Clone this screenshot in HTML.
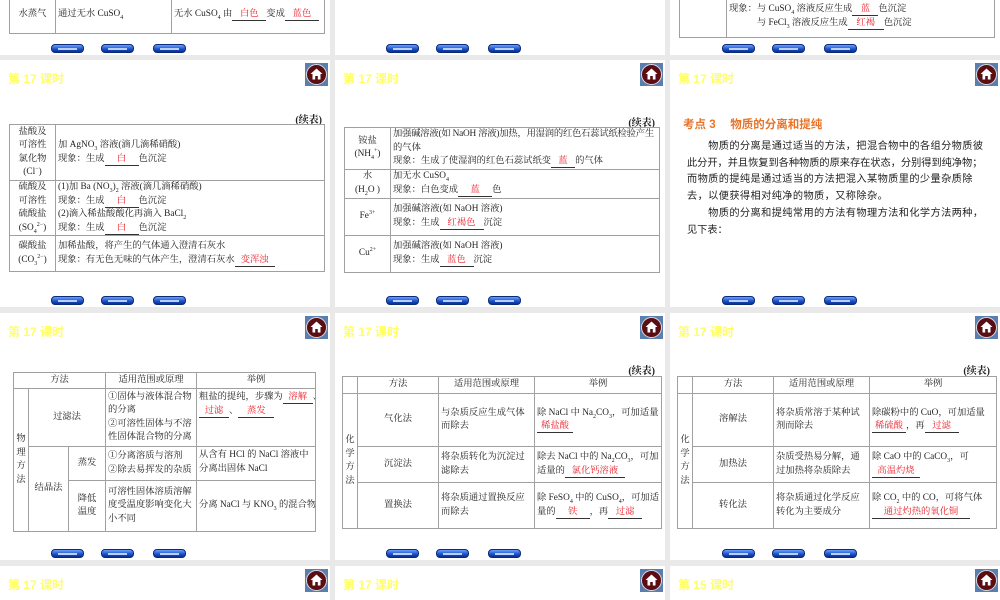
<!DOCTYPE html>
<html><head><meta charset="utf-8"><style>
*{margin:0;padding:0;box-sizing:border-box}
html,body{width:1000px;height:600px;overflow:hidden}
body{background:#e9e9e9;position:relative;font-family:"Liberation Serif","Noto Serif CJK SC",serif;color:#222}
.s{position:absolute;width:330px;height:247px;background:#fff;overflow:hidden}
.t{position:absolute;left:8px;top:10px;font:bold 12px "Liberation Sans","Noto Sans CJK SC",sans-serif;color:#ffff66}
.h{position:absolute;left:305px;top:3px;width:23px;height:23px;background:#5b7eb0}
.h i{position:absolute;left:1px;top:1px;width:21px;height:21px;border-radius:50%;background:#5a0d12;border:1.5px solid #d8d8d8}
.h svg{position:absolute;left:5px;top:5px}
.b{position:absolute;bottom:2px;width:33px;height:9px;border-radius:4px;background:linear-gradient(#6aa0ff,#1a4fc8 60%,#0c2f8a);border:1px solid #0b2a78}
.b::after{content:"";position:absolute;left:6px;right:6px;top:3px;height:2px;background:#b8d0ff}
table{position:absolute;border-collapse:collapse;table-layout:fixed;font-size:9.3px;line-height:13.5px}
td{border:1px solid #a0a0a0;padding:0 2px;vertical-align:middle;overflow:hidden}
sub,sup{font-size:6px;line-height:0}
.c{text-align:center}
.r{color:#e8202a;border-bottom:1px solid #333;display:inline-block;line-height:11px;text-align:center}
.xb{position:absolute;font-size:10px;font-weight:bold}
.p{position:absolute;left:17px;width:300px;font-size:10.2px;line-height:16.7px;white-space:nowrap;font-family:"Liberation Serif","Noto Sans CJK SC",sans-serif}
.sh{height:34px}
</style></head><body>

<!-- row 0 -->
<div class="s" style="left:0;top:-192px">
<table style="left:9px;top:187px;width:316px"><tr style="height:38px"><td class="c" style="width:46px">水蒸气</td><td style="width:116px">通过无水 CuSO<sub>4</sub></td><td style="white-space:nowrap">无水 CuSO<sub>4</sub> 由<span class="r" style="width:34px">白色</span>变成<span class="r" style="width:34px">蓝色</span></td></tr></table>
<i class="b" style="left:51px"></i><i class="b" style="left:101px"></i><i class="b" style="left:153px"></i>
</div>
<div class="s" style="left:335px;top:-192px">
<i class="b" style="left:51px"></i><i class="b" style="left:101px"></i><i class="b" style="left:153px"></i>
</div>
<div class="s" style="left:670px;top:-192px">
<table style="left:9px;top:170px;width:316px"><tr style="height:59px"><td style="width:47px"></td><td style="vertical-align:bottom;padding-bottom:7px;white-space:nowrap">现象：与 CuSO<sub>4</sub> 溶液反应生成<span class="r" style="width:26px">蓝</span>色沉淀<br>　　　与 FeCl<sub>3</sub> 溶液反应生成<span class="r" style="width:36px">红褐</span>色沉淀</td></tr></table>
<i class="b" style="left:52px"></i><i class="b" style="left:102px"></i><i class="b" style="left:154px"></i>
</div>

<!-- row 1 -->
<div class="s" style="left:0;top:60px">
<div class="t">第 17 课时</div>
<div class="h"><i></i><svg width="13" height="12" viewBox="0 0 13 12"><path d="M6.5 0.5L0.5 6H2.5V11.5H5.2V8H7.8V11.5H10.5V6H12.5Z" fill="#fff"/></svg></div>
<div class="xb" style="right:8px;top:51px">(续表)</div>
<table style="left:9px;top:64px;width:316px">
<tr style="height:56px"><td class="c" style="width:46px">盐酸及<br>可溶性<br>氯化物<br>(Cl<sup>−</sup>)</td><td>加 AgNO<sub>3</sub> 溶液(滴几滴稀硝酸)<br>现象：生成<span class="r" style="width:34px">白</span>色沉淀</td></tr>
<tr style="height:55px"><td class="c">硫酸及<br>可溶性<br>硫酸盐<br>(SO<sub>4</sub><sup>2−</sup>)</td><td>(1)加 Ba (NO<sub>3</sub>)<sub>2</sub> 溶液(滴几滴稀硝酸)<br>现象：生成<span class="r" style="width:34px">白</span>色沉淀<br>(2)滴入稀盐酸酸化再滴入 BaCl<sub>2</sub><br>现象：生成<span class="r" style="width:34px">白</span>色沉淀</td></tr>
<tr style="height:36px"><td class="c">碳酸盐<br>(CO<sub>3</sub><sup>2−</sup>)</td><td style="white-space:nowrap">加稀盐酸，将产生的气体通入澄清石灰水<br>现象：有无色无味的气体产生，澄清石灰水<span class="r" style="width:40px">变浑浊</span></td></tr>
</table>
<i class="b" style="left:51px"></i><i class="b" style="left:101px"></i><i class="b" style="left:153px"></i>
</div>

<div class="s" style="left:335px;top:60px">
<div class="t">第 17 课时</div>
<div class="h"><i></i><svg width="13" height="12" viewBox="0 0 13 12"><path d="M6.5 0.5L0.5 6H2.5V11.5H5.2V8H7.8V11.5H10.5V6H12.5Z" fill="#fff"/></svg></div>
<div class="xb" style="right:10px;top:54px">(续表)</div>
<table style="left:9px;top:67px;width:316px">
<tr style="height:41px"><td class="c" style="width:46px">铵盐<br>(NH<sub>4</sub><sup>+</sup>)</td><td><span style="white-space:nowrap;letter-spacing:-0.2px">加强碱溶液(如 NaOH 溶液)加热，用湿润的红色石蕊试纸检验产生</span><br>的气体<br><span style="white-space:nowrap">现象：生成了使湿润的红色石蕊试纸变<span class="r" style="width:24px">蓝</span>的气体</span></td></tr>
<tr style="height:29px"><td class="c">水<br>(H<sub>2</sub>O )</td><td>加无水 CuSO<sub>4</sub><br>现象：白色变成<span class="r" style="width:34px">蓝</span>色</td></tr>
<tr style="height:37px"><td class="c">Fe<sup>3+</sup></td><td>加强碱溶液(如 NaOH 溶液)<br>现象：生成<span class="r" style="width:44px">红褐色</span>沉淀</td></tr>
<tr style="height:37px"><td class="c">Cu<sup>2+</sup></td><td>加强碱溶液(如 NaOH 溶液)<br>现象：生成<span class="r" style="width:34px">蓝色</span>沉淀</td></tr>
</table>
<i class="b" style="left:51px"></i><i class="b" style="left:101px"></i><i class="b" style="left:153px"></i>
</div>

<div class="s" style="left:670px;top:60px">
<div class="t">第 17 课时</div>
<div class="h"><i></i><svg width="13" height="12" viewBox="0 0 13 12"><path d="M6.5 0.5L0.5 6H2.5V11.5H5.2V8H7.8V11.5H10.5V6H12.5Z" fill="#fff"/></svg></div>
<div style="position:absolute;left:13px;top:56px;font:bold 11.5px 'Liberation Sans','Noto Sans CJK SC',sans-serif;color:#e8742a">考点 3　 物质的分离和提纯</div>
<div class="p" style="top:79px">
<div style="letter-spacing:0.4px">　　物质的分离是通过适当的方法，把混合物中的各组分物质彼</div>
<div>此分开，并且恢复到各种物质的原来存在状态，分别得到纯净物；</div>
<div style="letter-spacing:0.4px">而物质的提纯是通过适当的方法把混入某物质里的少量杂质除</div>
<div style="letter-spacing:0.4px">去，以便获得相对纯净的物质，又称除杂。</div>
<div style="letter-spacing:0.4px">　　物质的分离和提纯常用的方法有物理方法和化学方法两种，</div>
<div>见下表：</div>
</div>
<i class="b" style="left:52px"></i><i class="b" style="left:102px"></i><i class="b" style="left:154px"></i>
</div>

<!-- row 2 -->
<div class="s" style="left:0;top:313px">
<div class="t">第 17 课时</div>
<div class="h"><i></i><svg width="13" height="12" viewBox="0 0 13 12"><path d="M6.5 0.5L0.5 6H2.5V11.5H5.2V8H7.8V11.5H10.5V6H12.5Z" fill="#fff"/></svg></div>
<table style="left:13px;top:59px;width:303px">
<colgroup><col style="width:15px"><col style="width:40px"><col style="width:37px"><col style="width:91px"><col></colgroup>
<tr style="height:16px"><td class="c" colspan="3">方法</td><td class="c">适用范围或原理</td><td class="c">举例</td></tr>
<tr style="height:58px"><td class="c" rowspan="3" style="padding:0">物<br>理<br>方<br>法</td><td class="c" colspan="2">过滤法</td><td>①固体与液体混合物的分离<br>②可溶性固体与不溶性固体混合物的分离</td><td style="vertical-align:top;padding-top:2px;white-space:nowrap">粗盐的提纯，步骤为<span class="r" style="width:30px">溶解</span>、<br><span class="r" style="width:30px">过滤</span>、<span class="r" style="width:36px">蒸发</span></td></tr>
<tr style="height:34px"><td class="c" rowspan="2">结晶法</td><td class="c">蒸发</td><td>①分离溶质与溶剂<br>②除去易挥发的杂质</td><td style="vertical-align:top;padding-top:2px">从含有 HCl 的 NaCl 溶液中分离出固体 NaCl</td></tr>
<tr style="height:51px"><td class="c">降低<br>温度</td><td>可溶性固体溶质溶解度受温度影响变化大小不同</td><td style="white-space:nowrap">分离 NaCl 与 KNO<sub>3</sub> 的混合物</td></tr>
</table>
<i class="b" style="left:51px"></i><i class="b" style="left:101px"></i><i class="b" style="left:153px"></i>
</div>

<div class="s" style="left:335px;top:313px">
<div class="t">第 17 课时</div>
<div class="h"><i></i><svg width="13" height="12" viewBox="0 0 13 12"><path d="M6.5 0.5L0.5 6H2.5V11.5H5.2V8H7.8V11.5H10.5V6H12.5Z" fill="#fff"/></svg></div>
<div class="xb" style="right:10px;top:49px">(续表)</div>
<table style="left:7px;top:63px;width:320px">
<colgroup><col style="width:15px"><col style="width:81px"><col style="width:96px"><col></colgroup>
<tr style="height:17px"><td></td><td class="c">方法</td><td class="c">适用范围或原理</td><td class="c">举例</td></tr>
<tr style="height:53px"><td class="c" rowspan="3" style="padding:0">化<br>学<br>方<br>法</td><td class="c">气化法</td><td>与杂质反应生成气体而除去</td><td><span style="white-space:nowrap">除 NaCl 中 Na<sub>2</sub>CO<sub>3</sub>，可加适量</span><br><span class="r" style="width:36px">稀盐酸</span></td></tr>
<tr style="height:36px"><td class="c">沉淀法</td><td>将杂质转化为沉淀过滤除去</td><td><span style="white-space:nowrap">除去 NaCl 中的 Na<sub>2</sub>CO<sub>3</sub>，可加</span><br>适量的<span class="r" style="width:60px">氯化钙溶液</span></td></tr>
<tr style="height:46px"><td class="c">置换法</td><td>将杂质通过置换反应而除去</td><td><span style="white-space:nowrap">除 FeSO<sub>4</sub> 中的 CuSO<sub>4</sub>，可加适</span><br>量的<span class="r" style="width:34px">铁</span>，再<span class="r" style="width:34px">过滤</span></td></tr>
</table>
<i class="b" style="left:51px"></i><i class="b" style="left:101px"></i><i class="b" style="left:153px"></i>
</div>

<div class="s" style="left:670px;top:313px">
<div class="t">第 17 课时</div>
<div class="h"><i></i><svg width="13" height="12" viewBox="0 0 13 12"><path d="M6.5 0.5L0.5 6H2.5V11.5H5.2V8H7.8V11.5H10.5V6H12.5Z" fill="#fff"/></svg></div>
<div class="xb" style="right:10px;top:49px">(续表)</div>
<table style="left:7px;top:63px;width:320px">
<colgroup><col style="width:15px"><col style="width:81px"><col style="width:96px"><col></colgroup>
<tr style="height:17px"><td></td><td class="c">方法</td><td class="c">适用范围或原理</td><td class="c">举例</td></tr>
<tr style="height:53px"><td class="c" rowspan="3" style="padding:0">化<br>学<br>方<br>法</td><td class="c">溶解法</td><td>将杂质常溶于某种试剂而除去</td><td><span style="white-space:nowrap">除碳粉中的 CuO，可加适量</span><br><span class="r" style="width:34px">稀硫酸</span>，再<span class="r" style="width:34px">过滤</span></td></tr>
<tr style="height:36px"><td class="c">加热法</td><td>杂质受热易分解，通过加热将杂质除去</td><td><span style="white-space:nowrap">除 CaO 中的 CaCO<sub>3</sub>，可</span><br><span class="r" style="width:48px">高温灼烧</span></td></tr>
<tr style="height:46px"><td class="c">转化法</td><td>将杂质通过化学反应转化为主要成分</td><td><span style="white-space:nowrap">除 CO<sub>2</sub> 中的 CO，可将气体</span><br><span class="r" style="width:98px">通过灼热的氧化铜</span></td></tr>
</table>
<i class="b" style="left:52px"></i><i class="b" style="left:102px"></i><i class="b" style="left:154px"></i>
</div>

<!-- row 3 -->
<div class="s sh" style="left:0;top:566px">
<div class="t">第 17 课时</div>
<div class="h"><i></i><svg width="13" height="12" viewBox="0 0 13 12"><path d="M6.5 0.5L0.5 6H2.5V11.5H5.2V8H7.8V11.5H10.5V6H12.5Z" fill="#fff"/></svg></div>
</div>
<div class="s sh" style="left:335px;top:566px">
<div class="t">第 17 课时</div>
<div class="h"><i></i><svg width="13" height="12" viewBox="0 0 13 12"><path d="M6.5 0.5L0.5 6H2.5V11.5H5.2V8H7.8V11.5H10.5V6H12.5Z" fill="#fff"/></svg></div>
</div>
<div class="s sh" style="left:670px;top:566px">
<div class="t">第 15 课时</div>
<div class="h"><i></i><svg width="13" height="12" viewBox="0 0 13 12"><path d="M6.5 0.5L0.5 6H2.5V11.5H5.2V8H7.8V11.5H10.5V6H12.5Z" fill="#fff"/></svg></div>
</div>
</body></html>
